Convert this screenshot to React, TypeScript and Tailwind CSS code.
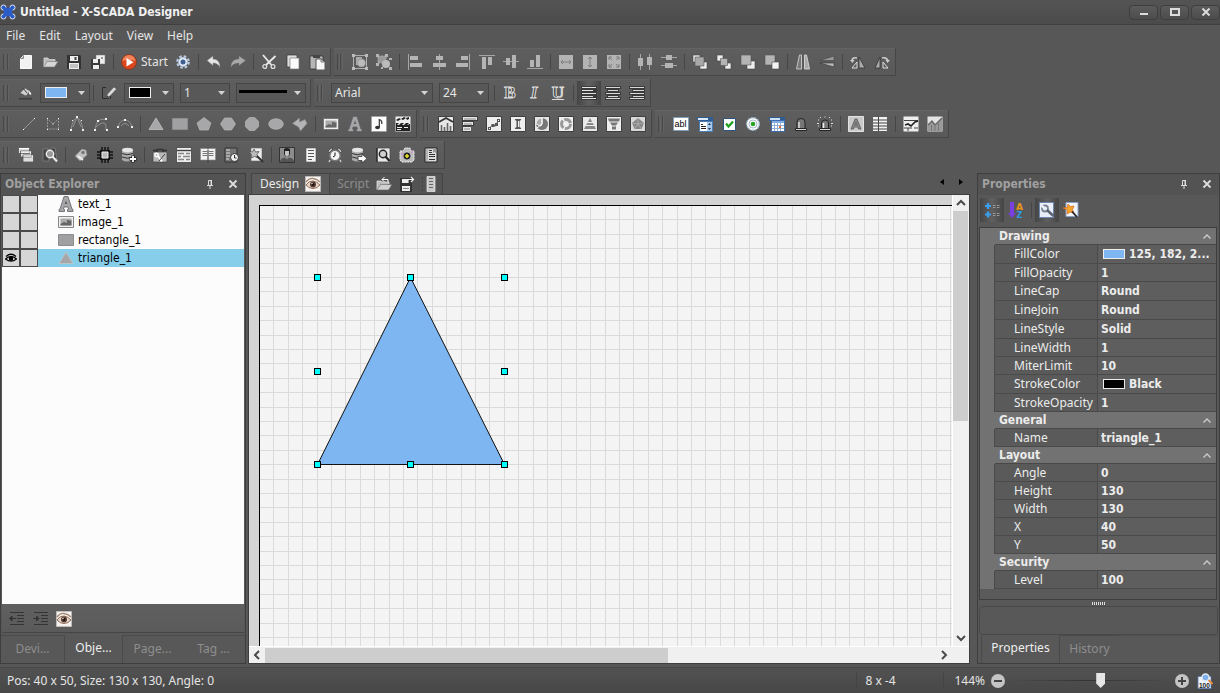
import { useState, type ReactNode } from 'react';

/* 16x16 artwork used by the toolbars and the panels */
const art: Record<string, ReactNode> = {
  new: <><path d="M5.500 1.500h8v13h-11v-10z" fill="#f2f2f2" stroke="#fafafa" /><path d="M2.500 4.500h3v-3" fill="#bbb" stroke="#8a8a8a" /></>,
  open: <><path d="M2 13V4h4l1 2h6v2" fill="#bdbdbd" /><path d="M2 13 5 7.500h11L12.500 13z" fill="#d6d6d6" stroke="#777" strokeWidth=".6" /><path d="M2 13V4h4l1 1.500h6V7" fill="none" stroke="#ddd" strokeWidth=".8" /></>,
  save: <><path d="M1 1h13l1 1v13H1z" fill="#333" /><path d="M4 2h8v5H4zM3 9h10v6H3z" fill="#eee" /><path d="M8.500 3h2v3h-2z" fill="#444" /><path d="M4 11h8M4 13h8" stroke="#999" /></>,
  saveAll: <><path d="M6 1h9v9H6z" fill="#eee" stroke="#777" strokeWidth=".5" /><path d="M1 5h9v10H1z" fill="#3a3a3a" /><path d="M3 5h5v4H3zM3 11h6v4H3z" fill="#eee" /><path d="M11 3h2v2h-2z" fill="#999" /></>,
  start: <><circle cx="8" cy="8" r="7.500" fill="#d9481c" stroke="#7c2b16" strokeWidth=".6" /><path d="M1.500 7a6.500 6 0 0 1 13 0q-6-2-13 0z" fill="#f0825a" /><path d="m5.500 4 7 4.300-7 4.200z" fill="#fff" /></>,
  gear: <><circle cx="8" cy="8" r="5.800" fill="none" stroke="#b9cdea" strokeWidth="2" strokeDasharray="2.600 1.950" /><circle cx="8" cy="8" r="3.600" fill="#3f5f93" stroke="#dde8f7" strokeWidth="2.200" /></>,
  undo: <path d="M1 6.500 7 2v3q7 0 7 8.500Q12 9 7 9v2.500z" fill="#e4e4e4" stroke="#777" strokeWidth=".4" />,
  redo: <path d="M15.500 6.500 9 2v3Q1 5 1 13q2-4 8-4v2.500z" fill="#a9a9a9" stroke="#777" strokeWidth=".4" />,
  cut: <><path d="M2 1 10.500 11M14.500 2 5 11" stroke="#eaeaea" strokeWidth="1.800" /><circle cx="3.800" cy="12.500" r="1.900" fill="none" stroke="#ddd" strokeWidth="1.300" /><circle cx="12" cy="12.500" r="1.900" fill="none" stroke="#ddd" strokeWidth="1.300" /></>,
  copy: <><path d="M2 1h10v12H2z" fill="#ddd" stroke="#333" strokeWidth=".7" /><path d="M5 4h9v11H5z" fill="#fafafa" stroke="#777" strokeWidth=".7" /></>,
  paste: <><path d="M1 2h13v13H1z" fill="#b5b5b5" stroke="#333" strokeWidth=".8" /><path d="M4 1h7v3H4z" fill="#444" /><path d="M7 5h5l4 3v8H7z" fill="#f6f6f6" stroke="#333" strokeWidth=".8" /><path d="M12 5v3h3" fill="none" stroke="#777" /></>,
  group: <><path d="M1.500 1.500h13v13h-13z" fill="none" stroke="#b0b0b0" /><path d="M4 3h6v8H4z" fill="#aaa" /><circle cx="9.500" cy="9" r="4" fill="#bcbcbc" stroke="#888" strokeWidth=".5" /><path d="M0 0h3v3H0zM13 0h3v3h-3zM0 13h3v3H0zM13 13h3v3h-3z" fill="#bbb" /></>,
  ungroup: <><path d="M2 2h8v7H2z" fill="#999" stroke="#aaa" strokeDasharray="2 1" /><circle cx="10" cy="10" r="4" fill="#bcbcbc" /><path d="M0 0h3v3H0zM9 0h3v3H9zM0 9h3v3H0zM5 13h2v2H5zM13 4h3v2h-3zM13 13h3v3h-3z" fill="#b4b4b4" /></>,
  alignL: <><path d="M1.500 0v16" stroke="#a6a6a6" /><path d="M3 2h8v4H3zM3 9h12v4H3z" fill="#b4b4b4" /></>,
  alignC: <><path d="M8.500 0v16" stroke="#a6a6a6" /><path d="M5 2h7v4H5zM2 9h13v4H2z" fill="#b4b4b4" /></>,
  alignR: <><path d="M14.500 0v16" stroke="#a6a6a6" /><path d="M6 2h7v4H6zM1 9h12v4H1z" fill="#b4b4b4" /></>,
  alignT: <><path d="M0 1.500h16" stroke="#a6a6a6" /><path d="M3 3h4v12H3zM9 3h4v8H9z" fill="#b4b4b4" /></>,
  alignM: <><path d="M0 7.500h16" stroke="#a6a6a6" /><path d="M3 4h4v7H3zM9 1h4v13H9z" fill="#b4b4b4" /></>,
  alignB: <><path d="M0 14.500h16" stroke="#a6a6a6" /><path d="M3 6h4v7H3zM9 1h4v12H9z" fill="#b4b4b4" /></>,
  sameW: <><path d="M1 1h14v14H1z" fill="#b4b4b4" /><path d="M3 8h10M5 6 3 8l2 2M11 6l2 2-2 2" fill="none" stroke="#7c7c7c" /></>,
  sameH: <><path d="M1 1h14v14H1z" fill="#b4b4b4" /><path d="M8 3v10M6 5l2-2 2 2M6 11l2 2 2-2" fill="none" stroke="#7c7c7c" /></>,
  sameS: <><path d="M1 1h14v14H1z" fill="#b4b4b4" /><path d="M3 6V3h3M3 3l3 3M10 3h3v3M13 3l-3 3M3 10v3h3M3 13l3-3M13 10v3h-3M13 13l-3-3" fill="none" stroke="#7c7c7c" /></>,
  distH: <><path d="M3.500 0v16M12.500 0v16" stroke="#a6a6a6" /><path d="M1 4h5v8H1zM10 3h5v8h-5z" fill="#b4b4b4" /></>,
  distV: <><path d="M0 3.500h16M0 11.500h16" stroke="#a6a6a6" /><path d="M5 1h6v5H5zM4 9h8v5H4z" fill="#b4b4b4" /></>,
  front: <><path d="M1 1h7v7H1zM8 8h7v7H8z" fill="#eee" stroke="#444" strokeWidth=".6" /><path d="M3 3h9v9H3z" fill="#a8a8a8" stroke="#555" strokeWidth=".6" /></>,
  forward: <><path d="M1 1h6v6H1zM9 9h6v6H9z" fill="#eee" stroke="#444" strokeWidth=".6" /><path d="M4.500 4.500h7v7h-7z" fill="#b4b4b4" stroke="#555" strokeWidth=".6" /></>,
  back: <><path d="M7 7h8v8H7z" fill="#eee" stroke="#444" strokeWidth=".6" /><path d="M1 1h10v10H1z" fill="#b4b4b4" stroke="#555" strokeWidth=".6" /></>,
  backward: <><path d="M1 1h10v10H1z" fill="#b4b4b4" stroke="#555" strokeWidth=".6" /><path d="M8 8h7v7H8z" fill="#f2f2f2" stroke="#444" strokeWidth=".6" /></>,
  flipH: <><path d="M6.500 1v14h-5L4.500 1z" fill="#777" stroke="#c4c4c4" /><path d="M9.500 1v14h5L11.500 1z" fill="#aaa" stroke="#ccc" /></>,
  flipV: <><path d="M1 6.500 15 2v4.500z" fill="#999" stroke="#444" strokeWidth=".6" /><path d="M1 9h14v4z" fill="#b8b8b8" stroke="#333" strokeWidth=".6" /></>,
  rotL: <><path d="M9 3v11h6z" fill="#aaa" stroke="#333" strokeWidth=".8" /><path d="M7 8v6H2z" fill="none" stroke="#ddd" /><path d="M2 7q0-4 5-3" fill="none" stroke="#ccc" strokeWidth="1.600" /><path d="m0 6 4.500 0-2 3z" fill="#ccc" /></>,
  rotR: <><path d="M6 3v11H1z" fill="#aaa" stroke="#333" strokeWidth=".8" /><path d="M9 8v6h5z" fill="none" stroke="#ddd" /><path d="M8 4q5-1 6 3" fill="none" stroke="#ccc" strokeWidth="1.600" /><path d="m16 6-4.500 0 2 3z" fill="#ccc" /></>,
  bucket: <><path d="M2 8 7 3l5 3-4 5z" fill="#cfcfcf" stroke="#555" strokeWidth=".6" /><path d="m5 3 4 5" stroke="#444" /><path d="M11 6q3 2 2 4l-2-1z" fill="#eee" /><path d="M1 13h13v1.500H1z" fill="#3c3c3c" /></>,
  pencil: <><path d="M5 2.500H1.500v11H8M9.500 13.500V11" fill="none" stroke="#2c2c2c" /><path d="M5 13 6.500 9l6.500-7 2.500 2L9 11z" fill="#dcdcdc" stroke="#555" strokeWidth=".6" /><path d="M5 13l1-2.500 1.500 1z" fill="#333" /></>,
  line: <><path d="M3 13 13 3" stroke="#969696" /><path d="M2 13h1v1H2zM13 2h1v1h-1z" fill="#fff" /></>,
  polyline: <><path d="M2.500 3v10h11V3L8 8z" fill="none" stroke="#969696" strokeDasharray="2 1" /><path d="M2 2h1v1H2zM13 2h1v1h-1zM7.500 7.500h1v1h-1zM2 13h1v1H2zM13 13h1v1h-1z" fill="#fff" /></>,
  bezier: <><path d="M2 14Q4 2 8 2q4 0 6 12M4 11 8 1l4 10" fill="none" stroke="#8f8f8f" /><path d="M1 13h2v2H1zM13 13h2v2h-2zM7 0h2v2H7zM3 4h1v1H3zM12 4h1v1h-1z" fill="#eee" /></>,
  curve: <><path d="M2 14Q3 7 5 5t8-2M3 11q9-8 10-1v4" fill="none" stroke="#8f8f8f" /><path d="M1 13h2v2H1zM13 13h2v2h-2zM4 4h2v2H4zM12 2h2v2h-2z" fill="#eee" /></>,
  arc: <><path d="M1 11Q3 4 8 4t7 7M4 10q4-5 8 0" fill="none" stroke="#8f8f8f" /><path d="M0 10h2v2H0zM14 10h2v2h-2zM7 3h2v2H7z" fill="#eee" /></>,
  triangle: <path d="M8 2 15 13.500H1z" fill="#a7a7aa" stroke="#c9c9c9" strokeWidth=".7" />,
  rectangle: <path d="M.5 2.500h15v11H.5z" fill="#a0a0a3" stroke="#8d8d8f" />,
  pentagon: <path d="m8 1.500 7 5.500-2.600 7H3.700L1 7z" fill="#a7a7aa" stroke="#c0c0c0" strokeWidth=".6" />,
  hexagon: <path d="M4.500 2h7L15.500 8l-4 6h-7L.5 8z" fill="#a7a7aa" stroke="#c0c0c0" strokeWidth=".6" />,
  circle: <path d="M5.300 1.500h5.400L14.500 5.300v5.400L10.700 14.500H5.300L1.500 10.700V5.300z" fill="#a7a7aa" stroke="#c0c0c0" strokeWidth=".6" />,
  ellipse: <ellipse cx="8" cy="8" rx="7.300" ry="5.300" fill="#a7a7aa" stroke="#c0c0c0" strokeWidth=".6" />,
  shape: <path d="M.5 7.500 7.500 2v4L13 3.500l2 4L8.500 15l-2-4z" fill="#b4b4b7" stroke="#888" strokeWidth=".6" />,
  image: <><path d="M.5 2.500h15v11H.5z" fill="#f0f0f0" stroke="#6b6b6b" strokeWidth=".8" /><path d="M2.500 4.500h11v7h-11z" fill="#aaa" /><path d="M2.500 10 6 8l3 1V6h2l1 1 1.500-1v5.500h-11z" fill="#555" opacity=".8" /></>,
  text: <><path d="M1 15.500V13.500l1-.5L6 .5h4L14 13l1 .5v2H9.500v-2l1-.5-.600-2H6.100l-.600 2 1 .5v2z" fill="#a6a6a9" stroke="#606066" strokeWidth=".8" /><path d="M6.700 8 8 4.500 9.300 8z" fill="#5d5d5d" /></>,
  music: <><path d="M.5.500h15v15H.5z" fill="#fff" stroke="#999" strokeWidth=".6" /><ellipse cx="6.500" cy="11.500" rx="2.400" ry="1.800" fill="#333" /><path d="M8.300 11.500V3.500q3 1 2.500 4.500" fill="none" stroke="#333" strokeWidth="1.200" /></>,
  video: <><path d="M.5.500h15v15H.5z" fill="#eee" /><path d="m1 4 3-2 2 1-3 2zM6 3l3-2 2 1-3 2zM11 2l3-1v2l-2 1zM1 7h14v8H1z" fill="#222" /><path d="m2 9 2-2h2L4 9zM7 9l2-2h2L9 9zM12 9l2-2h1v1zM2 11h5v1H2zM2 13h4v1H2zM9 11h4v1H9z" fill="#eee" /></>,
  chartBar: <><path d="M.5.500h15v15H.5z" fill="#e6e6e6" stroke="#3f3f3f" /><path d="m1 6 7-4 7 4" fill="none" stroke="#333" strokeWidth="1.800" /><path d="M3.500 9v6M6.500 11v4M9.500 7v8M12.500 10v5" stroke="#666" strokeWidth="1.600" /></>,
  chartRows: <><path d="M0 0h16v5H0zM0 5h12v5H0zM0 10h9v6H0z" fill="#3f3f3f" /><path d="M1 1h14v3H1zM1 6h10v3H1zM1 11h8v4H1z" fill="#e6e6e6" /><path d="M2 3h12M2 8h8M2 13h6" stroke="#888" /></>,
  chartLine: <><path d="M.5.500h15v15H.5z" fill="#ededed" stroke="#3f3f3f" /><path d="m3.500 12 3-3 3 1 3-6" fill="none" stroke="#444" /><path d="M2 11h3v3H2zM5.500 8h3v3h-3zM9 7h3v3H9zM11 3h3v3h-3z" fill="#555" /><path d="M3 12h1v1H3zM12 4h1v1h-1z" fill="#fff" /></>,
  gauge: <><path d="M.5.500h15v15H.5z" fill="#eee" stroke="#3f3f3f" /><path d="M5 3h6v1L9.500 5v6l1.500 1v1H5v-1l1.500-1V5L5 4z" fill="#555" /><path d="M8 5h1v6H8z" fill="#eee" /></>,
  pie: <><path d="M.5.500h15v15H.5z" fill="#e6e6e6" stroke="#3f3f3f" /><circle cx="8" cy="8" r="6" fill="#777" /><path d="M8 8V2a6 6 0 0 0-6 6l5 2z" fill="#aaa" stroke="#eee" /><path d="m8 8-5 4M8 2v6" stroke="#fff" /></>,
  donut: <><path d="M.5.500h15v15H.5z" fill="#f0f0f0" stroke="#3f3f3f" /><circle cx="8" cy="8" r="4.500" fill="none" stroke="#999" strokeWidth="3" strokeDasharray="8 1.400" /></>,
  pyramid: <><path d="M.5.500h15v15H.5z" fill="#e9e9e9" stroke="#3f3f3f" /><path d="M8 2 14 13H2z" fill="#888" /><path d="M3 6.500h10M2 9.500h12" stroke="#eee" /></>,
  funnel: <><path d="M.5.500h15v15H.5z" fill="#eee" stroke="#3f3f3f" /><path d="M2 2.500h12l-1 3H3zM4 6.500h8l-2 3H6zM6 10.500h4v3H6z" fill="#777" /></>,
  radar: <><path d="M.5.500h15v15H.5z" fill="#d8d8d8" stroke="#3f3f3f" /><path d="m8 2 6 5-2.500 6h-7L2 7z" fill="#888" /><path d="M8 2v6l6-1M8 8l3.500 5M8 8l-3.500 5M8 8 2 7" fill="none" stroke="#aaa" /></>,
  textbox: <><path d="M.5 1.500h15v13H.5z" fill="#fff" stroke="#7f9db9" /><text x="1.500" y="11" fontSize="9" fontFamily="Liberation Sans, sans-serif" fill="#000">abl</text></>,
  combobox: <><path d="M.5 1.500h15v3H.5z" fill="#dce9f8" stroke="#2f5d92" /><path d="M11 1h5v4h-5z" fill="#2f5d92" /><path d="M2.500 5.500h13v10h-13z" fill="#fff" stroke="#4a7db5" /><path d="M4 8.500h2M4 10.500h5M4 12.500h5" stroke="#222" /><path d="M10 6h5v9h-5z" fill="#a8c8ec" /><path d="m11 9 1.500-2L14 9zM11 12l1.500 2 1.500-2z" fill="#234" /></>,
  check: <><path d="M2.500 2.500h12v12h-12z" fill="#fff" stroke="#2d5480" /><path d="m5 7.500 2.500 3 4.500-5" fill="none" stroke="#1fa01f" strokeWidth="2.200" /></>,
  radio: <><circle cx="8" cy="8" r="6.300" fill="#fff" stroke="#9fbbcc" strokeWidth="1.400" strokeDasharray="2 1" /><circle cx="8" cy="8" r="4" fill="#fff" stroke="#a9b9c5" /><circle cx="8" cy="8" r="2.300" fill="#25a525" /></>,
  calendar: <><path d="M.5 1.500h15v3H.5z" fill="#cfe0f3" stroke="#2f5d92" /><path d="M11 1h5v4h-5z" fill="#2f5d92" /><path d="M2.500 4.500h13v11h-13z" fill="#fff" stroke="#3d6db0" /><path d="M3 5h12v2H3z" fill="#83aee2" /><path d="M5.500 7v8M8.500 7v8M11.500 7v8M3 9.500h12M3 12.500h12" stroke="#7b9ccc" strokeWidth=".8" /><path d="M10 10h2v2h-2z" fill="#e76a3c" /></>,
  alarm: <><path d="M4 13V6q0-3.500 4-3.500T12 6v7z" fill="#777" stroke="#222" /><path d="M6 12V6" stroke="#ddd" strokeWidth="1.500" /><path d="M2.500 12.500h11v2h-11z" fill="#ddd" stroke="#222" /></>,
  alarmOn: <><path d="M4.500 13V7q0-3 3.500-3t3.500 3v6z" fill="#777" stroke="#222" /><path d="M6.500 12V7" stroke="#eee" strokeWidth="1.500" /><path d="M2.500 12.500h11v2h-11z" fill="#ddd" stroke="#222" /><path d="M1 4h1M3 1.500h1M7.500 1h1M12 1.500h1M14 4h1M0 7.500h2M14 7.500h2M1 10h1M14 10h1" stroke="#ddd" strokeWidth="1.200" /></>,
  boxA: <><path d="M.5.500h15v15H.5z" fill="#c9c9c9" stroke="#e3e3e3" /><path d="M3 13 7 3h2l4 10h-2.500L9.800 11H6.200l-.700 2zM7 8.500h2L8 6z" fill="#858588" stroke="#555" strokeWidth=".7" /></>,
  table: <><path d="M1 1h14v14H1z" fill="#f2f2f2" /><path d="M1 4h14M1 7h14M1 10h14M1 13h14M6.500 1v14" stroke="#444" /></>,
  trend: <><path d="M.5.500h15v15H.5z" fill="#eee" /><path d="M1 4.500h14M1 12h8M11 12h4M5 12v3" stroke="#444" /><path d="m2 9 3-1 3 2 4-4 3-1" fill="none" stroke="#222" strokeWidth="1.600" /></>,
  area: <><path d="M.5.500h15v15H.5z" fill="#e3e3e3" /><path d="M1 15V9l4-4 3 4 7-7v13z" fill="#999" /><path d="m1 9 4-4 3 4 7-7" fill="none" stroke="#666" strokeWidth="1.400" /><path d="M4.500 9v6M8 10v5M11.500 7v8" stroke="#777" /></>,
  pages: <><path d="M.5.500h11v6H.5zM2.500 4h11v6h-11zM5 8h10.500v7H5z" fill="#ddd" stroke="#555" strokeWidth=".8" /><path d="M1 1.500h10M3 5h10M5.500 9h9.500" stroke="#fff" /></>,
  searchDev: <><path d="M1 2h5l1 12H1zM9 1h4l2 12h-3" fill="#444" stroke="#888" strokeWidth=".7" /><circle cx="8" cy="7" r="3.700" fill="#999" stroke="#eee" strokeWidth="1.400" /><path d="m10.500 9.500 4.500 5" stroke="#eee" strokeWidth="2" /></>,
  tag: <><path d="m2 9 7-7 4 1 1 5-7 6z" fill="#c0c0c0" stroke="#888" strokeWidth=".6" /><circle cx="10" cy="5.500" r="1.800" fill="#777" /><path d="m5 9 5 4" stroke="#eee" strokeWidth="2" /></>,
  chip: <><path d="M5 0v16M8 0v16M11 0v16M0 5h16M0 8h16M0 11h16" stroke="#111" strokeWidth="1.400" /><path d="M3 3h10v10H3z" fill="#111" /><path d="M5 5h6v6H5z" fill="#b8b8b8" stroke="#eee" /></>,
  database: <><path d="M1 3v10q5 3 11 0V3z" fill="#aaa" /><ellipse cx="6.500" cy="3" rx="5.500" ry="2.300" fill="#e6e6e6" /><path d="M1 6.500q5 2.500 11 0M1 10q5 2.500 11 0" fill="none" stroke="#333" /><path d="M12 8.500v7M8.500 12h7" stroke="#222" strokeWidth="3.400" /><path d="M12 9v6M9 12h6" stroke="#fff" strokeWidth="1.800" /></>,
  toolbox: <><path d="M1 5h14v10H1z" fill="#b9b9b9" stroke="#444" strokeWidth=".7" /><path d="M5 5V2.500h6V5M1 3.500h4M11 3.500h4" fill="none" stroke="#333" strokeWidth="1.400" /><circle cx="4.500" cy="8" r="1.700" fill="none" stroke="#fff" strokeWidth="1.400" /><path d="m6 9 4 5.500" stroke="#fff" strokeWidth="2" /><path d="M7 14 13 7" stroke="#444" /></>,
  form: <><path d="M.5.500h15v15H.5z" fill="#eee" stroke="#333" strokeWidth=".7" /><path d="M1 3.500h14" stroke="#444" strokeWidth="1.400" /><path d="M2 6.500h6M2 9.500h3M7 9.500h7M2 12.500h6M10 12.500h4M10 6.500h4" stroke="#888" strokeWidth="1.400" /></>,
  book: <><path d="M.5 1.500H7l1 1 1-1h6.500V13H9l-1 1-1-1H.5z" fill="#f2f2f2" stroke="#888" strokeWidth=".6" /><path d="M2.500 4.500H7M2.500 6.500H7M2.500 8.500H7M9 4.500h4.500M9 6.500h4.500M9 8.500h4.500" stroke="#777" /><path d="M8 3v12" stroke="#222" /></>,
  schedule: <><path d="M1 1h12v14H1z" fill="#777" stroke="#333" /><path d="M2 3h4M2 6h4M2 9h4M2 12h3" stroke="#ddd" strokeWidth="1.200" /><circle cx="10.500" cy="10.500" r="4" fill="#f2f2f2" stroke="#333" /><path d="M10.500 8v3h2" fill="none" stroke="#333" /></>,
  wizard: <><path d="M3 1h11v13H3z" fill="#eee" stroke="#666" strokeWidth=".6" /><path d="m6 2 1.500 3 3.500-.5L9 7.500l1 3.500-3.500-1.500L3 11l.500-3.500L1 5l3.500-.2z" fill="#bbb" stroke="#555" strokeWidth=".8" /><path d="m9 9 6 6" stroke="#333" strokeWidth="2" /></>,
  user: <><path d="M.5.500h15v15H.5z" fill="#8c8c8c" stroke="#333" /><path d="M5 2q3-2 6 0v5q-1 3-3 3T5 7z" fill="#222" /><path d="M6 4h4v4L8 10 6 8z" fill="#c4c4c4" /><path d="M1 15q0-4 5-4.500l2 2 2-2q5 .5 5 4.500z" fill="#555" /></>,
  notes: <><path d="M3 1h10v14H3z" fill="#f4f4f4" stroke="#555" strokeWidth=".6" /><path d="M5 3.500h6M5 6.500h6M5 9.500h6M5 12.500h4" stroke="#555" /></>,
  clock: <><path d="m1 4 3-3 2 1-4 4zM15 4l-3-3-2 1 4 4z" fill="#bbb" stroke="#333" strokeWidth=".6" /><circle cx="8" cy="8.500" r="5.200" fill="#f4f4f4" stroke="#777" strokeWidth="1.500" /><path d="M8 5.500v3.200L6 10" fill="none" stroke="#111" /><path d="m3 13-1 2M13 13l1 2" stroke="#ccc" strokeWidth="1.500" /></>,
  dbExport: <><path d="M1 3v10q5 3 11 0V3z" fill="#aaa" /><ellipse cx="6.500" cy="3" rx="5.500" ry="2.300" fill="#e6e6e6" /><path d="M1 6.500q5 2.500 11 0M1 10q5 2.500 11 0" fill="none" stroke="#333" /><path d="M7 9.500h4V7l5 4.500-5 4.500v-2.500H7z" fill="#fff" stroke="#333" strokeWidth=".8" /></>,
  preview: <><path d="M1 1h11v14H1z" fill="#333" /><path d="M2.500 1H15v14H2.500z" fill="#e6e6e6" stroke="#444" strokeWidth=".7" /><circle cx="8" cy="7" r="3.700" fill="#cfcfcf" stroke="#222" strokeWidth="1.400" /><path d="m10.500 9.500 4 4.500" stroke="#222" strokeWidth="2.200" /></>,
  camera: <><path d="M1 4h3l2-3h5l1 3h3v9l-2 2H3l-2-2z" fill="#bbb" stroke="#eee" strokeWidth="1" strokeDasharray="2 .7" /><path d="M2 7h2M3 10h1M12 5h2" stroke="#d77ad0" /><circle cx="8" cy="9" r="4" fill="#222" stroke="#eee" strokeWidth=".6" /><path d="M8 7v4M6 9h4" stroke="#e5e12b" strokeWidth="1.600" /></>,
  report: <><path d="M2 1h12v14H2z" fill="#ddd" stroke="#222" /><path d="M4 1v14" stroke="#888" /><path d="M6 3.500h3M6 5.500h3M6 7.500h6M6 9.500h6M6 12.500h6" stroke="#333" /><path d="M10 1h3v5l-1.500-1L10 6z" fill="#999" /></>,
  eye: <><path d="M.5.500h15v15H.5z" fill="#f7f2ee" stroke="#bbb" /><path d="M1 6q3-4 7-3.500T15 6" fill="none" stroke="#a58673" strokeWidth="1.300" /><path d="M1 9q3-4.500 7-4T15 9q-3 3.500-7 3.500T1 9z" fill="#e5d3c6" stroke="#8c6c5a" /><circle cx="8" cy="8.500" r="3" fill="#5a3c32" /><circle cx="8" cy="8.500" r="1.300" fill="#150c08" /><circle cx="7" cy="7.500" r=".7" fill="#fff" /></>,
  importFile: <><path d="M1 14V5h4l1 1h7v2" fill="#bbb" stroke="#eee" strokeWidth=".7" /><path d="M1 14 4.500 8.500H16L12.500 14z" fill="#d0d0d0" stroke="#666" strokeWidth=".6" /><path d="M12 6V3.500H6M8.500 1 6 3.500 8.500 6" fill="none" stroke="#fff" /></>,
  exportFile: <><path d="M1 2h12v14H1z" fill="#333" /><path d="M3 3h6v4H3zM3 10h8v5H3z" fill="#eee" /><path d="M9 7V3.500h5M12 1l2.500 2.500L12 6" fill="none" stroke="#eee" strokeWidth="1.200" /><path d="M4 12.500h6" stroke="#888" /></>,
  scriptDoc: <><path d="M.5 1v14" stroke="#444" strokeDasharray="2 2" /><path d="M5 .5h8v15H5z" fill="#c8c8c8" stroke="#eee" strokeWidth=".7" /><path d="M7 2.500h4M7 5.500h4M7 8.500h4M7 11.500h4" stroke="#666" /></>,
  outdent: <><path d="M2 1.500h14M9 4.500h7M9 7.500h7M9 10.500h7M2 13.500h14" stroke="#343434" /><path d="M2 7.500h6M4 5 1.500 7.500 4 10z" fill="#333" stroke="#333" /></>,
  indent: <><path d="M2 1.500h14M9 4.500h7M9 7.500h7M9 10.500h7M2 13.500h14" stroke="#343434" /><path d="M1 7.500h5M4.500 5 7 7.500 4.500 10z" fill="#333" stroke="#333" /></>,
  linesL: <><path d="M0 1h16v14H0z" fill="#3a3a3a" /><path d="M1 2.500h14M1 5.500h11M1 8.500h14M1 11.500h11M1 13.500h14" stroke="#e2e2e2" /></>,
  linesC: <><path d="M0 1h16v3H0zM2 4h12v3H2zM0 7h16v3H0zM2 10h12v3H2zM0 12h16v3H0z" fill="#3a3a3a" /><path d="M1 2.500h14M3 5.500h10M1 8.500h14M3 11.500h10M1 13.500h14" stroke="#d8d8d8" /></>,
  linesR: <><path d="M0 1h16v3H0zM3 4h13v3H3zM0 7h16v3H0zM3 10h13v3H3zM0 12h16v3H0z" fill="#3a3a3a" /><path d="M1 2.500h14M4 5.500h11M1 8.500h14M4 11.500h11M1 13.500h14" stroke="#d8d8d8" /></>,
  categorized: <><path d="M4 1v6M1 4h6M4 9.500v6M1 12.500h6" stroke="#39a0ee" strokeWidth="2.200" /><path d="M9 3.500h2.500M13 3.500h2.500M9 5.500h2.500M13 5.500h2.500M9 11.500h2.500M13 11.500h2.500M9 13.500h2.500M13 13.500h2.500" stroke="#999" /></>,
  sortAZ: <><path d="M2 0h4v11h2l-4 5-4-5h2z" fill="#7b3fe0" /><text x="8" y="8" fontSize="9" fontWeight="700" fontFamily="DejaVu Sans, sans-serif" fill="#e8961c">A</text><text x="8.500" y="15.500" fontSize="8" fontWeight="700" fontFamily="DejaVu Sans, sans-serif" fill="#2e9be6">Z</text></>,
  wrench: <><path d="M.5.500h14v15H.5z" fill="#e9eef7" stroke="#6c86b0" /><circle cx="6" cy="6.500" r="3" fill="none" stroke="#7c8695" strokeWidth="1.800" /><path d="m8 8 6.500 6" stroke="#5a6473" strokeWidth="2.600" /><path d="M2 3.500 5.500 6" stroke="#e9eef7" strokeWidth="2.200" /></>,
  star: <><path d="M3 .5h12v14H3z" fill="#f0f4fb" stroke="#8ba1c2" /><path d="m5 2 2.500 2.500L11 4 9.500 7.500 11 11l-3.500-1L4 12l.500-4L0 6l4.500-.500z" fill="#f5a42d" stroke="#d9701a" strokeWidth=".8" /><path d="m9 9.500 5 5.500" stroke="#222" strokeWidth="1.800" /></>,
  zoom100: <><path d="M1 3.500h13v12H1z" fill="#eef2fb" stroke="#5a78b0" strokeWidth=".8" /><circle cx="8.500" cy="4.500" r="3.500" fill="#7fb0ea" stroke="#dfe9f6" strokeWidth="1.400" /><path d="m11.500 7 4 4" stroke="#e38b3c" strokeWidth="2" /><text x="2" y="15" fontSize="6.500" fontWeight="700" fontFamily="Liberation Sans, sans-serif" fill="#222">100</text></>,
};

function Icon({ name }: { name: string }) {
  return (
    <svg viewBox="0 0 16 16" className="size-4 shrink-0" aria-hidden="true">
      {art[name]}
    </svg>
  );
}

function Separator() {
  return <span className="mx-[3px] h-4 w-px shrink-0 bg-[#464646]" />;
}

function Tools({ items, active = [] }: { items: string[]; active?: string[] }) {
  return (
    <>
      {items.map((name, i) =>
        name === '|' ? (
          <Separator key={i} />
        ) : (
          <button
            key={i}
            aria-label={name}
            className={`flex h-6 w-6 shrink-0 items-center justify-center ${
              active.includes(name) ? 'bg-linear-to-r from-[#454545] via-[#606060] to-[#454545]' : ''
            }`}
          >
            <Icon name={name} />
          </button>
        )
      )}
    </>
  );
}

function Toolbar({ inset, children }: { inset?: boolean; children: ReactNode }) {
  return (
    <div className="flex h-7 items-center border-r border-b border-[#464646] bg-linear-to-b from-[#5e5e5e] to-[#595959] pr-px shadow-[inset_0_1px_0_#636363]">
      <span className={`ml-[3px] flex h-4 w-[6px] shrink-0 gap-px ${inset ? 'mr-2' : 'mr-[5px]'}`}>
        <i className="w-px bg-[#484848]" />
        <i className="w-px bg-[#646464]" />
        <i className="w-px bg-[#484848]" />
        <i className="w-px bg-[#646464]" />
      </span>
      {children}
    </div>
  );
}

function Arrow() {
  return (
    <svg viewBox="0 0 7 4" className="pointer-events-none h-1 w-[7px] shrink-0" aria-hidden="true">
      <path d="M0 0h7L3.500 4z" fill="#d4d4d4" />
    </svg>
  );
}

function Combo({ label, options, width }: { label: string; options: string[]; width: string }) {
  return (
    <label className={`flex h-5 shrink-0 items-center border border-[#454545] bg-[#585858] pr-1 ${width}`}>
      <select aria-label={label} className="min-w-0 flex-1 appearance-none bg-transparent pl-[3px] text-[#e6e6e6] outline-none">
        {options.map((o) => (
          <option key={o}>{o}</option>
        ))}
      </select>
      <Arrow />
    </label>
  );
}

function Picker({ label, width, children }: { label: string; width: string; children: ReactNode }) {
  return (
    <button
      aria-label={label}
      className={`flex h-5 shrink-0 items-center justify-between border border-[#454545] bg-[#585858] pr-1 ${width}`}
    >
      {children}
      <Arrow />
    </button>
  );
}

function FontStyle({ label, look, children }: { label: string; look: string; children: string }) {
  return (
    <button
      aria-label={label}
      className={`h-6 w-6 font-[family-name:Liberation_Serif,serif] text-[17px] font-bold text-[#404040] [-webkit-text-stroke:1px_#dcdcdc] ${look}`}
    >
      {children}
    </button>
  );
}

function PanelHeader({ title }: { title: string }) {
  return (
    <div className="flex h-[21px] shrink-0 items-center bg-[#535353] pr-[7px] pb-px pl-1 text-[#a0a0a0]">
      <h2 className="flex-1 font-[family-name:DejaVu_Sans_Condensed,Tahoma,sans-serif] font-bold">{title}</h2>
      <button aria-label="Pin" className="mr-[13px]">
        <svg viewBox="0 0 10 10" className="size-[10px]">
          <path d="M3.500 1.500h3v5h-3zM2 6.500h6M5 6.500V10" fill="none" stroke="#ddd" />
          <path d="M5.500 1H7v5H5.500z" fill="#ddd" />
        </svg>
      </button>
      <button aria-label="Close">
        <svg viewBox="0 0 10 10" className="size-[10px]">
          <path d="m1.500 1.500 7 7M8.500 1.500l-7 7" stroke="#ddd" strokeWidth="1.800" />
        </svg>
      </button>
    </div>
  );
}

const objects = [
  { name: 'text_1', icon: 'text' },
  { name: 'image_1', icon: 'image' },
  { name: 'rectangle_1', icon: 'rectangle' },
  { name: 'triangle_1', icon: 'triangle' },
];

function ObjectExplorer() {
  const [selected, setSelected] = useState('triangle_1');

  return (
    <aside className="flex w-[246px] shrink-0 flex-col border border-[#3e3e3e] bg-[#585858]">
      <PanelHeader title="Object Explorer" />
      <ul className="mx-px min-h-0 flex-1 bg-[#fcfcfc] font-[family-name:DejaVu_Sans_Condensed,Tahoma,sans-serif] text-black">
        {objects.map((o) => (
          <li key={o.name} className={`flex h-[18px] items-center ${o.name === selected ? 'bg-[#87ceeb]' : ''}`}>
            <span className="relative flex">
              <input
                type="checkbox"
                aria-label={`${o.name} visible`}
                className="h-[18px] w-[18px] appearance-none border border-[#4a4a4a] bg-[#d6d6d6]"
              />
              <input
                type="checkbox"
                aria-label={`${o.name} locked`}
                className="h-[18px] w-[18px] appearance-none border border-[#4a4a4a] bg-[#d6d6d6]"
              />
              {o.name === selected && (
                <svg viewBox="0 0 12 10" className="pointer-events-none absolute top-1 left-[3px] h-[10px] w-3">
                  <path d="M1 3.500Q6-1 11 3.500M.5 6Q6 1 11.500 6 6 10.500.5 6z" fill="#eee" stroke="#000" strokeWidth="1.200" />
                  <circle cx="6" cy="5.800" r="2.300" />
                </svg>
              )}
            </span>
            <button className="ml-5 flex flex-1 items-center gap-1 text-left" onClick={() => setSelected(o.name)}>
              <Icon name={o.icon} />
              {o.name}
            </button>
          </li>
        ))}
      </ul>
      <div className="mx-px flex h-[29px] shrink-0 items-center border-b border-[#464646] bg-linear-to-b from-[#606060] to-[#5a5a5a] pt-px pl-0.5">
        <Tools items={['outdent', 'indent', 'eye']} />
      </div>
      <div className="mt-[2px] flex h-7 shrink-0 text-[#8e8e8e]">
        <button className="w-16 border-t border-r border-[#4a4a4a] pb-0.5">Devi...</button>
        <button className="w-[57px] pb-0.5 text-[#eee]">Obje...</button>
        <button className="w-[60px] border-t border-l border-[#4a4a4a] pb-0.5">Page...</button>
        <button className="flex-1 border-t border-[#4a4a4a] pb-0.5">Tag ...</button>
      </div>
    </aside>
  );
}

const SCALE = 1.44;
const shape = { x: 40, y: 50, size: 130 };

function Canvas() {
  // grid step is 10 units
  const steps = Array.from({ length: 140 }, (_, i) => Math.round((i + 1) * 10 * SCALE));
  const left = Math.round(shape.x * SCALE);
  const top = Math.round(shape.y * SCALE);
  const right = Math.round((shape.x + shape.size) * SCALE);
  const bottom = Math.round((shape.y + shape.size) * SCALE);
  const midX = Math.floor((left + right) / 2);
  const midY = Math.round((top + bottom) / 2);
  const handles = [
    [left, top], [midX, top], [right, top],
    [left, midY], [right, midY],
    [left, bottom], [midX, bottom], [right, bottom],
  ];

  return (
    <div className="min-h-0 min-w-0 flex-1 bg-[#d3d3d3] pt-[10px] pl-[10px]">
      <svg className="h-full w-full bg-[#f4f4f4]" role="img" aria-label="Drawing canvas">
        <g fill="#dadada">
          {steps.map((p) => (
            <g key={p}>
              <rect x={p} y="0" width="1" height="100%" />
              <rect x="0" y={p} width="100%" height="1" />
            </g>
          ))}
        </g>
        <rect width="100%" height="1" fill="#000" />
        <rect width="1" height="100%" fill="#000" />
        <path
          d={`M${midX + 0.5} ${top + 0.5}L${right + 0.5} ${bottom + 0.5}H${left + 0.5}z`}
          fill="#7db6f0"
          stroke="#111"
        />
        {handles.map(([x, y]) => (
          <rect key={`${x}-${y}`} x={x - 2.5} y={y - 2.5} width="6" height="6" fill="#00ffff" stroke="#000" />
        ))}
      </svg>
    </div>
  );
}

function Chevron({ d }: { d: string }) {
  return (
    <svg viewBox="0 0 10 10" className="size-[10px]">
      <path d={d} fill="none" stroke="#4a4a4a" strokeWidth="2" />
    </svg>
  );
}

function Workspace() {
  return (
    <main className="flex min-w-0 flex-1 flex-col">
      <div className="flex h-[21px] shrink-0 pl-[3px] text-[#e8e8e8]">
        <button className="flex items-center gap-[6px] border border-b-0 border-[#444] bg-[#5c5c5c] px-2">
          Design
          <Icon name="eye" />
        </button>
        <div className="flex items-center gap-[7px] border-t border-r border-[#444] bg-[#535353] pr-1 pl-[7px] text-[#8c8c8c]">
          Script
          <Icon name="importFile" />
          <Icon name="exportFile" />
          <Icon name="scriptDoc" />
        </div>
        <div className="ml-auto flex items-center gap-[15px] pr-[7px] pb-1">
          <button aria-label="Previous tab">
            <svg viewBox="0 0 4 6" className="h-[6px] w-1"><path d="M4 0v6L0 3z" /></svg>
          </button>
          <button aria-label="Next tab">
            <svg viewBox="0 0 4 6" className="h-[6px] w-1"><path d="M0 0v6l4-3z" /></svg>
          </button>
        </div>
      </div>
      <div className="flex min-h-0 flex-1 flex-col border border-[#3e3e3e] bg-[#f0f0f0]">
        <div className="flex min-h-0 flex-1">
          <Canvas />
          <div className="flex w-[17px] shrink-0 flex-col items-center border-l border-white">
            <button aria-label="Scroll up" className="flex h-4 items-center">
              <Chevron d="m1 7 4-4 4 4" />
            </button>
            <div className="flex w-full flex-1 flex-col">
              <div className="h-1/2 w-[15px] bg-[#cdcdcd]" />
            </div>
            <button aria-label="Scroll down" className="flex h-4 items-center">
              <Chevron d="m1 3 4 4 4-4" />
            </button>
          </div>
        </div>
        <div className="flex h-[17px] shrink-0 items-center border-t border-white pr-[17px]">
          <button aria-label="Scroll left" className="flex w-4 justify-center">
            <Chevron d="M7 1 3 5l4 4" />
          </button>
          <div className="h-[15px] flex-1">
            <div className="h-full w-3/5 bg-[#cdcdcd]" />
          </div>
          <button aria-label="Scroll right" className="flex w-4 justify-center">
            <Chevron d="m3 1 4 4-4 4" />
          </button>
        </div>
      </div>
    </main>
  );
}

type Property = { name: string; value: string; swatch?: string; editor?: boolean };

const sections: { title: string; rows: Property[] }[] = [
  {
    title: 'Drawing',
    rows: [
      { name: 'FillColor', value: '125, 182, 2...', swatch: 'bg-[#7db6f0]', editor: true },
      { name: 'FillOpacity', value: '1' },
      { name: 'LineCap', value: 'Round', editor: true },
      { name: 'LineJoin', value: 'Round', editor: true },
      { name: 'LineStyle', value: 'Solid', editor: true },
      { name: 'LineWidth', value: '1' },
      { name: 'MiterLimit', value: '10' },
      { name: 'StrokeColor', value: 'Black', swatch: 'bg-black', editor: true },
      { name: 'StrokeOpacity', value: '1' },
    ],
  },
  { title: 'General', rows: [{ name: 'Name', value: 'triangle_1' }] },
  {
    title: 'Layout',
    rows: [
      { name: 'Angle', value: '0' },
      { name: 'Height', value: '130' },
      { name: 'Width', value: '130' },
      { name: 'X', value: '40' },
      { name: 'Y', value: '50' },
    ],
  },
  { title: 'Security', rows: [{ name: 'Level', value: '100' }] },
];

function PropertyGrid() {
  return (
    <table className="w-full table-fixed border-separate border-spacing-0 text-left leading-4 text-[#ececec]">
      <colgroup>
        <col className="w-[15px]" />
        <col className="w-[103px]" />
        <col />
      </colgroup>
      {sections.map((s) => (
        <tbody key={s.title}>
          <tr className="h-[17px]">
            <th className="bg-[#727272] p-0" />
            <th colSpan={2} className="border-b border-[#484848] bg-[#727272] p-0 pl-1 font-[family-name:DejaVu_Sans_Condensed,Tahoma,sans-serif] leading-4">
              <span className="flex items-center justify-between pr-[5px]">
                {s.title}
                <svg viewBox="0 0 8 5" className="h-[5px] w-2"><path d="m.5 4.500 3.500-3.500 3.500 3.500" fill="none" stroke="#ccc" strokeWidth="1.300" /></svg>
              </span>
            </th>
          </tr>
          {s.rows.map((r) => (
            <tr key={r.name} className={r.editor ? 'h-[19px]' : 'h-[18px]'}>
              <td className="border-r border-[#4a4a4a] bg-[#727272] p-0" />
              <th scope="row" className="border-r border-b border-[#4a4a4a] bg-[#5a5a5a] p-0 pl-[19px] font-normal">
                {r.name}
              </th>
              <td className="border-b border-[#4a4a4a] bg-[#5e5e5e] p-0 pl-[3px] font-[family-name:DejaVu_Sans_Condensed,Tahoma,sans-serif] font-bold">
                <span className="flex items-center whitespace-nowrap">
                  {r.swatch && <i className={`mr-1 ml-0.5 h-[10px] w-[22px] shrink-0 border border-[#eee] ${r.swatch}`} />}
                  {r.value}
                </span>
              </td>
            </tr>
          ))}
        </tbody>
      ))}
    </table>
  );
}

function PropertiesPanel() {
  return (
    <aside className="flex w-[243px] shrink-0 flex-col border border-[#3e3e3e] bg-[#585858]">
      <PanelHeader title="Properties" />
      <div className="flex h-8 shrink-0 items-center pb-0.5 pl-[2px]">
        <Tools items={['categorized', 'sortAZ', '|', 'wrench', 'star']} active={['categorized', 'wrench']} />
      </div>
      <div className="mr-[2px] ml-px h-[373px] shrink-0 border border-[#3e3e3e] bg-[#5a5a5a]">
        <PropertyGrid />
      </div>
      <div className="mx-auto mt-[2px] h-[3px] w-[14px] shrink-0 bg-[repeating-linear-gradient(90deg,#ddd_0_1px,transparent_1px_2px)]" />
      <div className="mx-px mt-px min-h-6 flex-1 rounded-sm border border-[#484848]" />
      <div className="flex h-7 shrink-0 text-[#8e8e8e]">
        <button className="ml-[3px] w-[78px] border-l border-[#4a4a4a] pb-0.5 text-[#eee]">Properties</button>
        <button className="w-15 border-t border-l border-[#4a4a4a] pb-0.5">History</button>
        <span className="flex-1 border-t border-[#525252]" />
      </div>
    </aside>
  );
}

function WindowButton({ label, children }: { label: string; children: ReactNode }) {
  return (
    <button
      aria-label={label}
      className="flex h-[15px] w-[29px] items-center justify-center rounded-sm border border-[#3f3f3f] bg-linear-to-b from-[#5c5c5c] to-[#4c4c4c]"
    >
      <svg viewBox="0 0 10 8" className="h-2 w-[10px]" fill="none" stroke="#dcdcdc">
        {children}
      </svg>
    </button>
  );
}

export default function App() {
  const [zoom, setZoom] = useState(57);

  return (
    <div className="flex h-screen min-w-0 flex-col overflow-hidden bg-[#575757] font-[family-name:Noto_Sans,sans-serif] text-[12px] leading-4 text-[#e4e4e4]">
      <header className="flex h-[25px] shrink-0 items-center border-b border-[#404040] bg-linear-to-b from-[#545454] to-[#4b4b4b]">
        <svg viewBox="0 0 16 16" className="mr-1 size-4">
          <g fill="#2b5bc7" stroke="#dce6fb">
            <circle cx="3.500" cy="3.500" r="2.500" />
            <circle cx="12.500" cy="3.500" r="2.500" />
            <circle cx="3.500" cy="12.500" r="2.500" />
            <circle cx="12.500" cy="12.500" r="2.500" />
          </g>
          <path d="M3.500 2.500Q8 5 12.500 2.500l1 1Q11 8 13.500 12.500l-1 1Q8 11 3.500 13.500l-1-1Q5 8 2.500 3.500z" fill="#2b5bc7" />
        </svg>
        <h1 className="flex-1 font-[family-name:DejaVu_Sans_Condensed,Tahoma,sans-serif] font-bold text-[#f0f0f0]">Untitled - X-SCADA Designer</h1>
        <div className="flex gap-[2px]">
          <WindowButton label="Minimize"><path d="M1 6h8" strokeWidth="2" /></WindowButton>
          <WindowButton label="Maximize"><path d="M1 1h8v6H1z" strokeWidth="2" /></WindowButton>
          <WindowButton label="Close"><path d="m1.500 .5 7 7M8.500 .5l-7 7" strokeWidth="2" /></WindowButton>
        </div>
      </header>

      <nav className="flex h-[22px] shrink-0 items-center gap-[14px] pl-[6px]">
        {['File', 'Edit', 'Layout', 'View', 'Help'].map((m) => (
          <button key={m}>{m}</button>
        ))}
      </nav>

      <div className="flex shrink-0 flex-col gap-[3px] pt-px pb-1">
        <div className="flex gap-[3px]">
          <Toolbar>
            <Tools items={['new', 'open', 'save', 'saveAll', '|']} />
            <button className="flex items-center gap-1 pr-[3px] pl-1 whitespace-nowrap">
              <Icon name="start" />
              Start
            </button>
            <Tools items={['gear', '|', 'undo', 'redo', '|', 'cut', 'copy', 'paste']} />
          </Toolbar>
          <Toolbar>
            <Tools
              items={[
                'group', 'ungroup', '|', 'alignL', 'alignC', 'alignR', 'alignT', 'alignM', 'alignB', '|',
                'sameW', 'sameH', 'sameS', '|', 'distH', 'distV', '|', 'front', 'forward', 'back', 'backward', '|',
                'flipH', 'flipV', '|', 'rotL', 'rotR',
              ]}
            />
          </Toolbar>
        </div>

        <div className="flex gap-[3px]">
          <Toolbar>
            <Tools items={['bucket']} />
            <Picker label="Fill color" width="ml-[2px] w-[50px]">
              <i className="ml-1 h-[11px] w-[22px] border border-[#eee] bg-[#7db6f0]" />
            </Picker>
            <span className="mr-[3px] flex items-center">
              <Tools items={['|', 'pencil']} />
            </span>
            <span className="mr-[3px] flex gap-[6px]">
              <Picker label="Line color" width="w-[50px]">
                <i className="ml-1 h-[11px] w-[22px] border border-[#eee] bg-black" />
              </Picker>
              <Combo label="Line width" options={['1', '2', '3']} width="w-[50px]" />
              <Picker label="Line style" width="w-[70px]">
                <i className="mb-0.5 ml-0.5 h-[3px] w-12 bg-black" />
              </Picker>
            </span>
          </Toolbar>
          <Toolbar>
            <span className="mr-[2px] ml-[3px] flex gap-[6px]">
              <Combo label="Font" options={['Arial', 'Tahoma']} width="w-[102px]" />
              <Combo label="Font size" options={['24', '12', '36']} width="w-[50px]" />
            </span>
            <Separator />
            <FontStyle label="Bold" look="">B</FontStyle>
            <FontStyle label="Italic" look="italic">I</FontStyle>
            <FontStyle label="Underline" look="underline">U</FontStyle>
            <Tools items={['|', 'linesL', 'linesC', 'linesR']} active={['linesL']} />
          </Toolbar>
        </div>

        <div className="flex gap-[3px]">
          <Toolbar inset>
            <Tools
              items={[
                'line', 'polyline', 'bezier', 'curve', 'arc', '|', 'triangle', 'rectangle', 'pentagon', 'hexagon',
                'circle', 'ellipse', 'shape', '|', 'image', 'text', 'music', 'video',
              ]}
            />
          </Toolbar>
          <Toolbar>
            <Tools items={['chartBar', 'chartRows', 'chartLine', 'gauge', 'pie', 'donut', 'pyramid', 'funnel', 'radar']} />
          </Toolbar>
          <Toolbar>
            <Tools
              items={[
                'textbox', 'combobox', 'check', 'radio', 'calendar', 'alarm', 'alarmOn', '|', 'boxA', 'table', '|',
                'trend', 'area',
              ]}
            />
          </Toolbar>
        </div>

        <div className="flex">
          <Toolbar>
            <Tools
              items={[
                'pages', 'searchDev', '|', 'tag', 'chip', 'database', '|', 'toolbox', 'form', 'book', 'schedule',
                'wizard', '|', 'user', 'notes', 'clock', 'dbExport', 'preview', 'camera', 'report',
              ]}
            />
          </Toolbar>
        </div>
      </div>

      <div className="flex min-h-0 flex-1">
        <ObjectExplorer />
        <div className="mx-[2px] flex min-w-0 flex-1 pr-[5px]">
          <Workspace />
        </div>
        <PropertiesPanel />
      </div>

      <footer className="mt-[3px] flex h-[26px] shrink-0 items-center border-t border-[#474747] bg-linear-to-b from-[#525252] to-[#474747] pl-[7px]">
        <span className="flex-1">Pos: 40 x 50, Size: 130 x 130, Angle: 0</span>
        <span className="w-[87px] border-l border-[#444] pl-2">8 x -4</span>
        <span className="border-l border-[#444] pl-[10px]">144%</span>
        <button aria-label="Zoom out" className="ml-[6px]">
          <svg viewBox="0 0 14 14" className="size-[14px]"><circle cx="7" cy="7" r="7" fill="#c4c4c4" /><path d="M3 7h8" stroke="#444" strokeWidth="2" /></svg>
        </button>
        <div className="mx-1 flex w-[162px] items-center bg-[linear-gradient(90deg,transparent,#333,transparent)] bg-[length:100%_1px] bg-center bg-no-repeat">
          <input
            type="range"
            aria-label="Zoom"
            value={zoom}
            onChange={(e) => setZoom(Number(e.target.value))}
            className="h-4 w-full appearance-none bg-transparent [&::-webkit-slider-thumb]:h-[15px] [&::-webkit-slider-thumb]:w-[9px] [&::-webkit-slider-thumb]:appearance-none [&::-webkit-slider-thumb]:bg-[#e6e6e6] [&::-webkit-slider-thumb]:[clip-path:polygon(0_0,100%_0,100%_70%,50%_100%,0_70%)]"
          />
        </div>
        <button aria-label="Zoom in" className="mr-2">
          <svg viewBox="0 0 14 14" className="size-[14px]"><circle cx="7" cy="7" r="7" fill="#c4c4c4" /><path d="M3 7h8M7 3v8" stroke="#444" strokeWidth="2" /></svg>
        </button>
        <button aria-label="Reset zoom" className="mr-[7px]">
          <Icon name="zoom100" />
        </button>
      </footer>
    </div>
  );
}
